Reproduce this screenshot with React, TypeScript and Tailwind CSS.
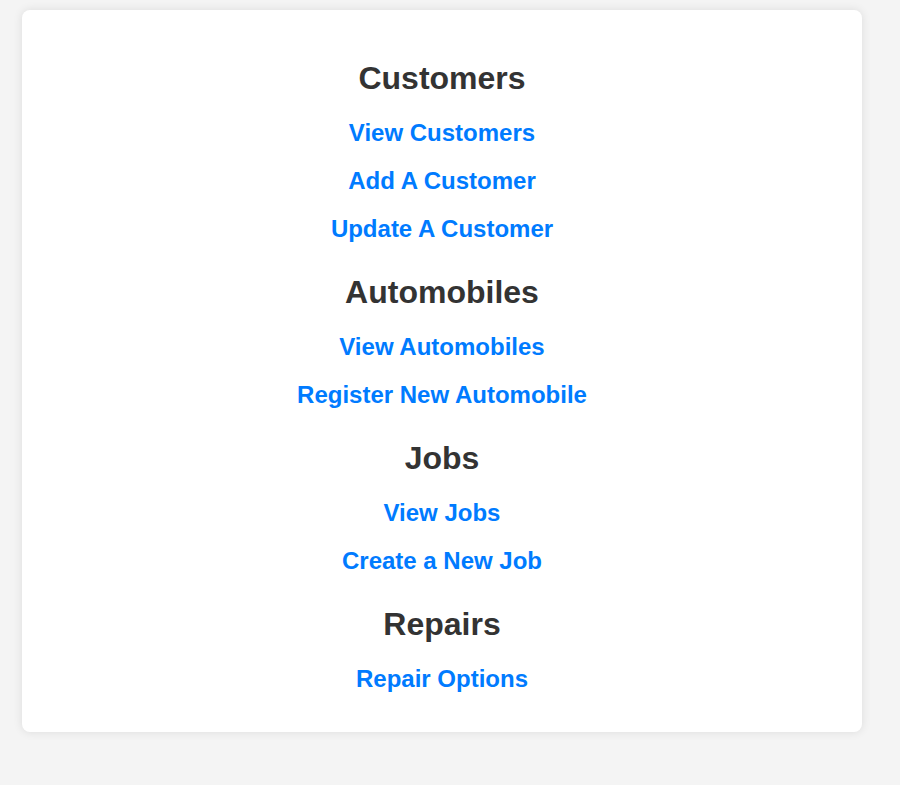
import React from 'react';

interface Section {
  title: string;
  links: string[];
}

const sections: Section[] = [
  { title: 'Customers', links: ['View Customers', 'Add A Customer', 'Update A Customer'] },
  { title: 'Automobiles', links: ['View Automobiles', 'Register New Automobile'] },
  { title: 'Jobs', links: ['View Jobs', 'Create a New Job'] },
  { title: 'Repairs', links: ['Repair Options'] },
];

const App: React.FC = () => {
  return (
    <div className="min-h-[785px] bg-[#f4f4f4] pt-[10px] pl-[22px] [font-family:'Liberation_Sans',Arial,sans-serif]">
      <div className="w-[840px] bg-white rounded-lg shadow-[0_0_10px_rgba(0,0,0,0.1)] pt-[50px] pb-[39px] flex flex-col gap-[31px]">
        {sections.map((section) => (
          <div key={section.title} className="flex flex-col items-center">
            <h2 className="h-[36px] leading-[36px] text-[32px] font-bold text-[#333] mb-[23px]">
              {section.title}
            </h2>
            <div className="flex flex-col items-center gap-[20px]">
              {section.links.map((link) => (
                <a
                  key={link}
                  href="#"
                  className="h-[28px] leading-[28px] text-[24px] font-bold text-[#007bff] no-underline"
                >
                  {link}
                </a>
              ))}
            </div>
          </div>
        ))}
      </div>
    </div>
  );
};

export default App;
